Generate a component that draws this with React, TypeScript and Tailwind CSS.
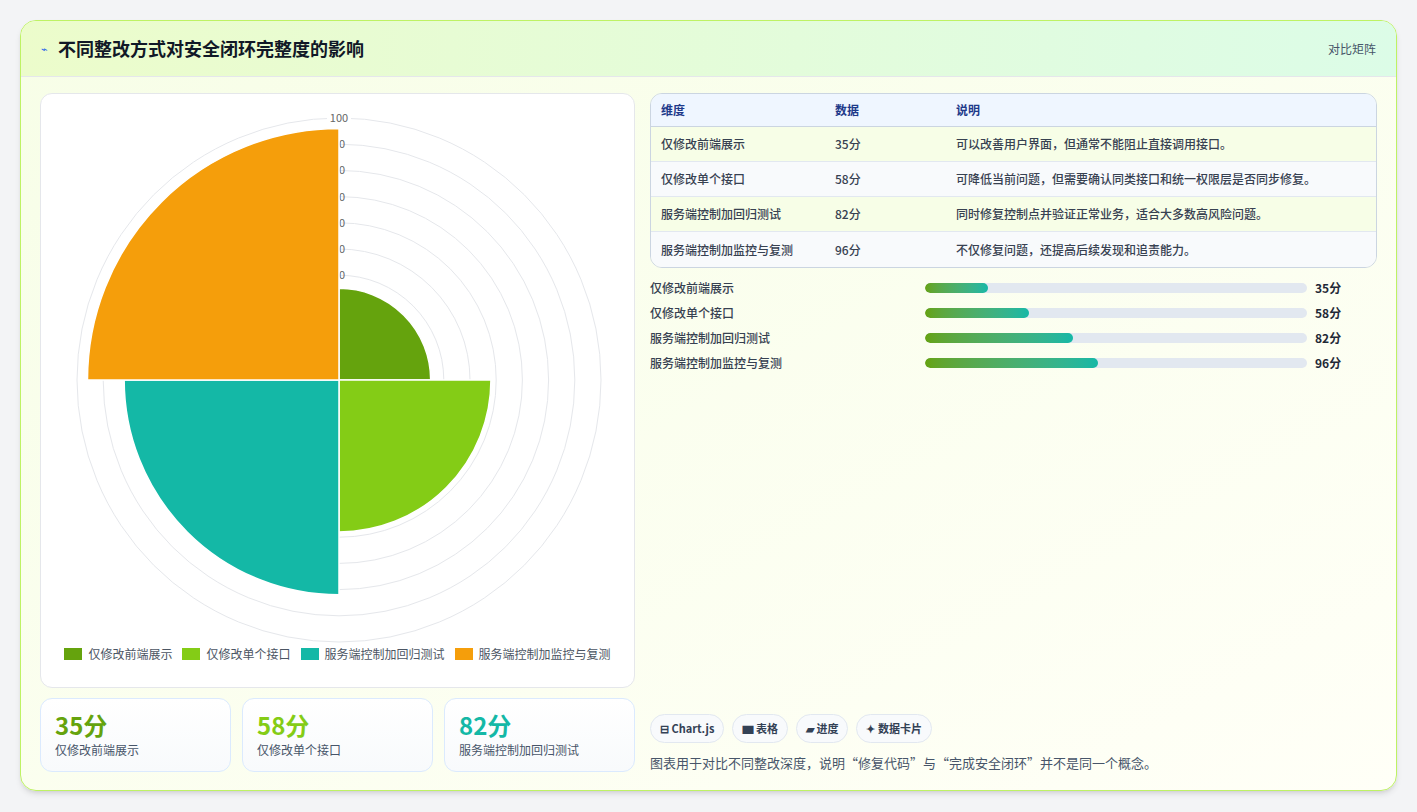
import React from "react";

const F = { fontFamily: '"Noto Sans CJK SC", "Noto Sans", sans-serif' };
const data = [
  { name: "仅修改前端展示", v: 35, c: "#65a30d", d: "可以改善用户界面，但通常不能阻止直接调用接口。" },
  { name: "仅修改单个接口", v: 58, c: "#84cc16", d: "可降低当前问题，但需要确认同类接口和统一权限层是否同步修复。" },
  { name: "服务端控制加回归测试", v: 82, c: "#14b8a6", d: "同时修复控制点并验证正常业务，适合大多数高风险问题。" },
  { name: "服务端控制加监控与复测", v: 96, c: "#f59e0b", d: "不仅修复问题，还提高后续发现和追责能力。" },
];

function Chart() {
  const cx = 298, cy = 282, k = 2.62;
  const seg = (r: number, a0: number, a1: number) => {
    const p = (a: number) => [cx + r * Math.cos(a), cy + r * Math.sin(a)];
    const [x0, y0] = p(a0), [x1, y1] = p(a1);
    return `M${cx},${cy} L${x0},${y0} A${r},${r} 0 0 1 ${x1},${y1} Z`;
  };
  const angles = [[-Math.PI / 2, 0], [0, Math.PI / 2], [Math.PI / 2, Math.PI], [Math.PI, 1.5 * Math.PI]];
  return (
    <svg width="595" height="545" className="block">
      {Array.from({ length: 10 }, (_, i) => (
        <circle key={i} cx={cx} cy={cy} r={(i + 1) * 10 * k} fill="none" stroke="#e5e7eb" strokeWidth="1" />
      ))}
      {[90, 80, 70, 60, 50, 40, 30, 20, 10].map((v) => (
        <text key={v} x={cx} y={cy - v * k + 4} fontSize="11" fill="#666" textAnchor="middle" style={F}>{v}</text>
      ))}
      {data.map((d, i) => (
        <path key={i} d={seg(d.v * k, angles[i][0], angles[i][1])} fill={d.c} stroke="#fff" strokeWidth="1.5" />
      ))}
      <rect x={cx - 12} y={cy - 100 * k - 7} width="24" height="12" fill="#fff" />
      <text x={cx} y={cy - 100 * k + 4} fontSize="11" fill="#666" textAnchor="middle" style={F}>100</text>
    </svg>
  );
}

export default function App() {
  return (
    <div className="min-h-[812px] bg-[#f3f4f6] p-5 pb-0" style={F}>
      <div className="rounded-2xl border border-[#bef264] bg-gradient-to-br from-[#f7fee7] to-[#fffff7] overflow-hidden shadow-md h-[771px] flex flex-col">
        <div className="h-[56px] flex items-center justify-between px-5 bg-gradient-to-r from-[#ecfccb] to-[#dcfce7] border-b border-[#e5e7eb]">
          <div className="flex items-center gap-2.5">
            <span className="text-[11px] text-[#2563eb]">⌁</span>
            <span className="text-[18px] font-bold text-[#111827]">不同整改方式对安全闭环完整度的影响</span>
          </div>
          <span className="text-[12px] text-[#475569]">对比矩阵</span>
        </div>
        <div className="flex gap-[15px] px-[19px] pt-[16px]">
          <div className="w-[595px] flex flex-col gap-[10px]">
            <div className="h-[595px] rounded-xl border border-[#e5e7eb] bg-white flex flex-col">
              <div className="pt-[4px]"><Chart /></div>
              <div className="flex items-center justify-center gap-[10px] text-[12px] text-[#4b5563] mt-[2px]">
                {data.map((d) => (
                  <div key={d.name} className="flex items-center gap-[6px]">
                    <span className="w-[18px] h-[12px]" style={{ background: d.c }} />
                    {d.name}
                  </div>
                ))}
              </div>
            </div>
            <div className="grid grid-cols-3 gap-[11px]">
              {data.slice(0, 3).map((d) => (
                <div key={d.name} className="h-[74px] rounded-xl border border-[#dbeafe] bg-gradient-to-b from-white to-[#f8fafc] px-[14px] pt-[10px]">
                  <div className="text-[24px] font-bold leading-[32px]" style={{ color: d.c }}>{d.v}分</div>
                  <div className="text-[12px] text-[#475569]">{d.name}</div>
                </div>
              ))}
            </div>
          </div>
          <div className="flex-1 flex flex-col">
            <div className="rounded-xl border border-[#cbd5e1] overflow-hidden text-[12px]">
              <div className="flex h-[33px] items-center bg-[#eff6ff] text-[#1e3a8a] font-bold border-b border-[#cbd5e1]">
                <div className="w-[184px] pl-[10px]">维度</div>
                <div className="w-[121px]">数据</div>
                <div>说明</div>
              </div>
              {data.map((d, i) => (
                <div key={d.name} className={`flex h-[35px] items-center text-[#374151] font-medium ${i < 3 ? "border-b border-[#e2e8f0]" : ""} ${i % 2 ? "bg-[#f8fafc]" : "bg-[#f7fee7]"}`}>
                  <div className="w-[184px] pl-[10px]">{d.name}</div>
                  <div className="w-[121px]">{d.v}分</div>
                  <div>{d.d}</div>
                </div>
              ))}
            </div>
            <div className="flex flex-col gap-[9px] mt-[12px] text-[12px]">
              {data.map((d) => (
                <div key={d.name} className="flex items-center h-[16px]">
                  <div className="w-[275px] text-[#374151] font-medium">{d.name}</div>
                  <div className="w-[382px] h-[10px] rounded-full bg-[#e2e8f0] overflow-hidden">
                    <div className="h-full rounded-full bg-gradient-to-r from-[#65a30d] to-[#14b8a6]" style={{ width: `${d.v * 1.8 / 382 * 100}%` }} />
                  </div>
                  <div className="ml-[8px] font-bold text-[#1f2937]">{d.v}分</div>
                </div>
              ))}
            </div>
            <div className="flex-1" />
            <div className="flex gap-[8px] text-[11px] font-bold text-[#334155] mt-[342px]">
              {["⊟ Chart.js", "▆ 表格", "▰ 进度", "✦ 数据卡片"].map((t) => (
                <span key={t} className="h-[29px] px-[9px] flex items-center rounded-full border border-[#e2e8f0] bg-[#f8fafc]">{t}</span>
              ))}
            </div>
            <div className="text-[13px] text-[#475569] mt-[10px]">图表用于对比不同整改深度，说明“修复代码”与“完成安全闭环”并不是同一个概念。</div>
          </div>
        </div>
      </div>
    </div>
  );
}
